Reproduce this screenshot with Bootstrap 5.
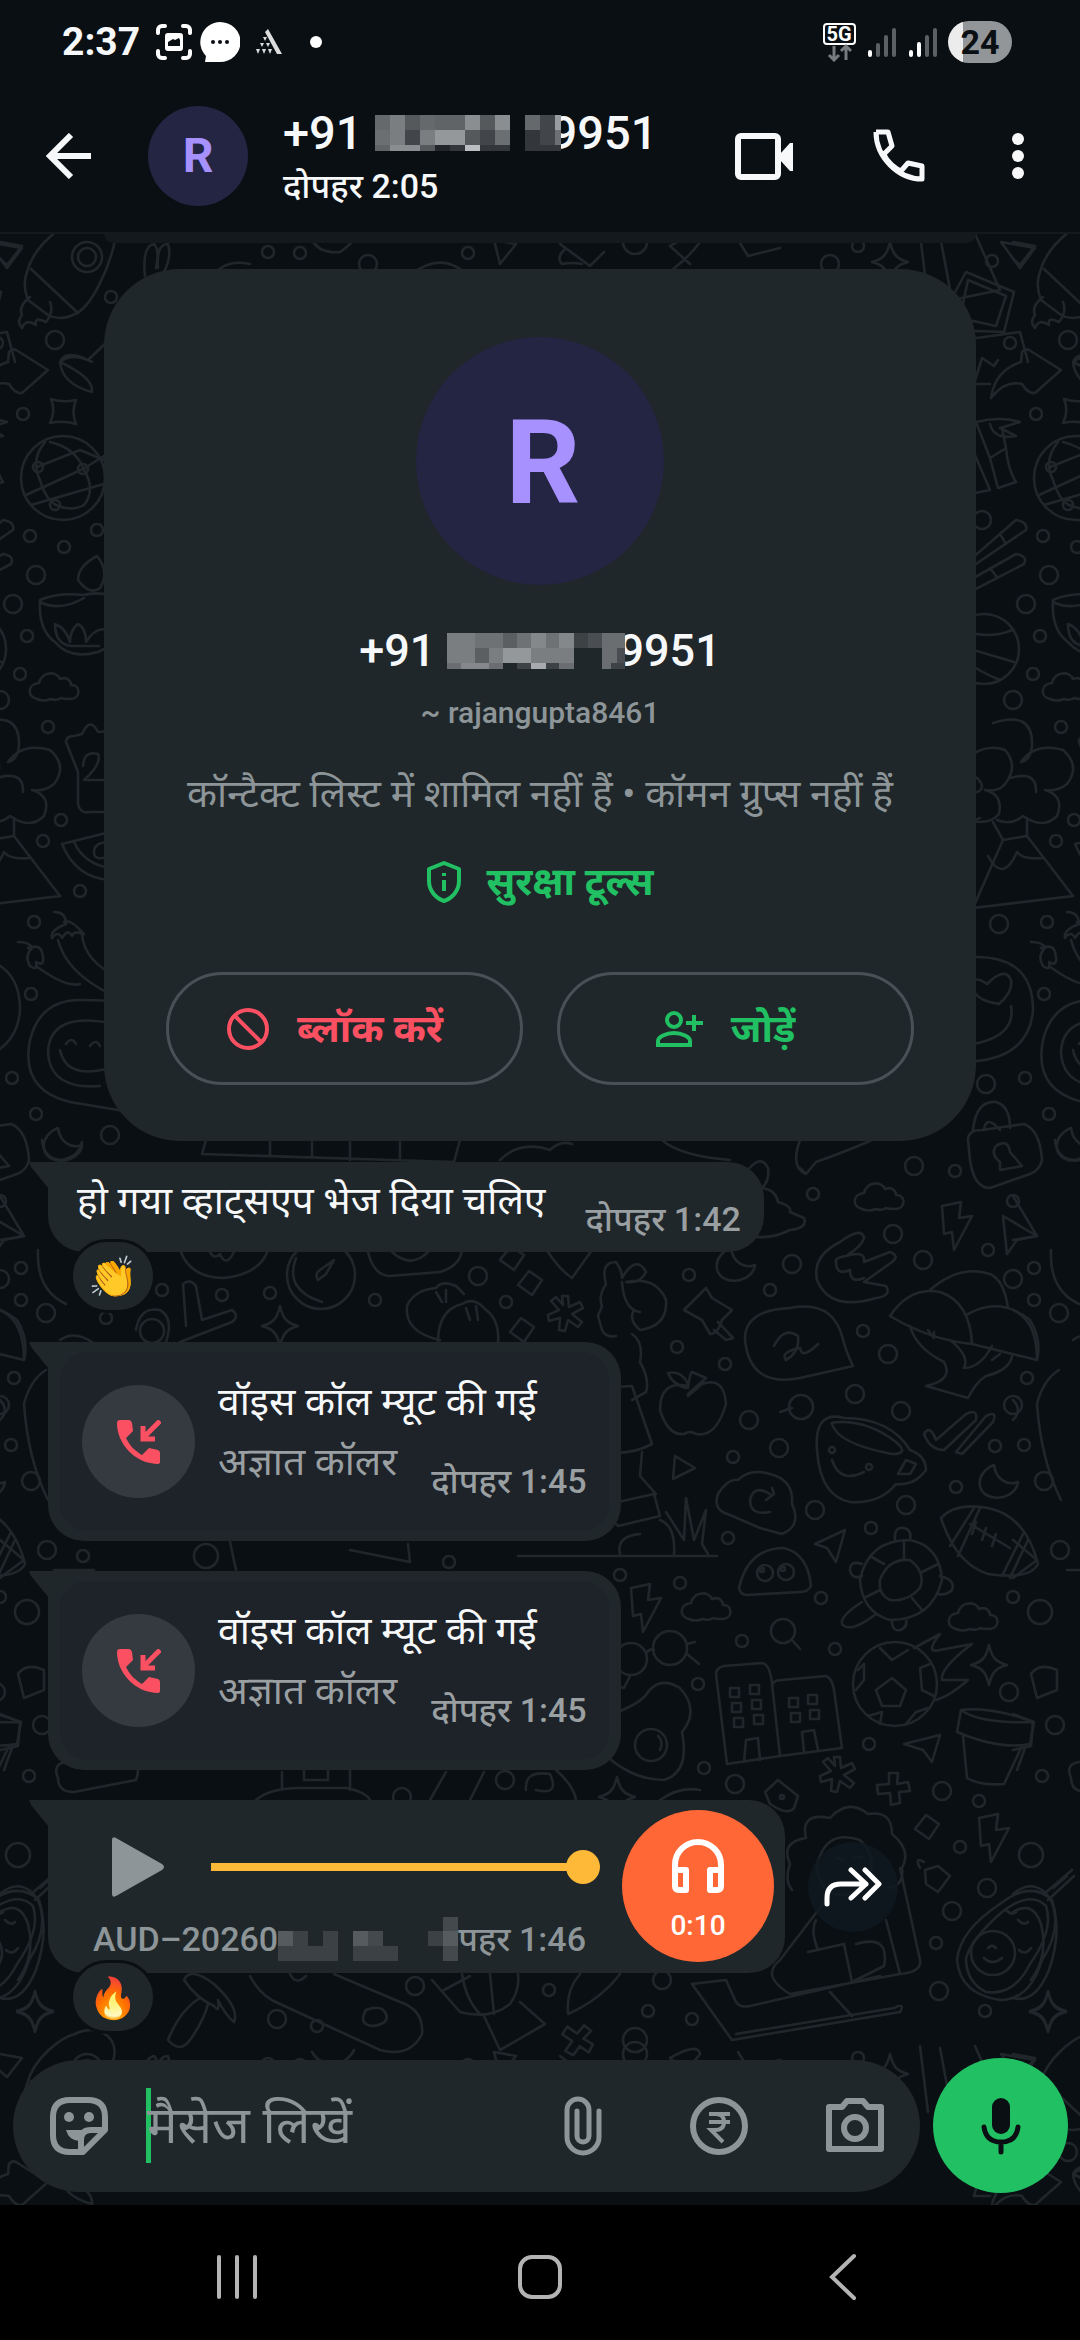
<!DOCTYPE html>
<html lang="hi">
<head>
<meta charset="utf-8">
<meta name="viewport" content="width=device-width, initial-scale=1">
<title>+91 9951</title>
<link href="https://cdn.jsdelivr.net/npm/bootstrap@5.3.0/dist/css/bootstrap.min.css" rel="stylesheet">
<style>
:root{--ink:#f7f8fa;--dim:#8d9598;--panel:#1f272a;--base:#0a0f13;--green:#21c063;--red:#fb5061}
body{background:var(--base);color:var(--ink);font-family:Roboto,"Noto Sans Devanagari","Noto Sans","Noto Color Emoji",sans-serif;font-weight:500;font-size:34px;line-height:44px}
svg{display:block;flex:none}
.plain{border:0;background:none;padding:0;color:inherit;display:flex;align-items:center;justify-content:center}
.statusbar{height:84px;padding:0 68px 0 62px}
.clock{font-size:39px;font-weight:700}
.radios{gap:6px}
.batt{width:64px;height:42px;border-radius:21px;background:linear-gradient(90deg,#ececec 15px,#929699 15px);color:#0a0f13;font-weight:700;font-size:34px;line-height:42px}
.topbar{height:150px;padding:0 32px 4px 46px;border-bottom:2px solid #14191d}
.face{background:#242443;color:#a791ff;border-radius:50%;font-weight:700;display:flex;align-items:center;justify-content:center}
.face-s{width:100px;height:100px;font-size:48px;margin:0 35px 0 56px}
.face-l{width:248px;height:248px;font-size:117px;padding:4px 0 0 6px}
.num{font-size:47px;line-height:56px;gap:12px;margin-bottom:3px}
.num-l{font-size:45px;line-height:60px;gap:12px;margin-top:36px}
.num svg,.num-l svg{position:relative;z-index:1}
.num-cut{margin-left:-22px}
.num-l .num-cut{margin-left:-19px}
.tap{width:60px;height:60px}
.calls{gap:75px;margin-right:59px}
.chat{background:var(--base)}
.wall{position:absolute;inset:0;width:100%;height:100%;z-index:0}
.layer{position:relative;z-index:1}
.older{height:9px;margin:0 104px;background:#13191c;border-radius:0 0 24px 24px}
.who{margin:26px 104px 21px;padding:68px 62px 56px;background:var(--panel);border-radius:76px}
.handle{font-size:30px;line-height:40px;color:var(--dim);margin-top:12px}
.facts{font-size:39px;line-height:56px;color:var(--dim);font-weight:400;margin-top:33px;white-space:nowrap}
.safety{font-size:39px;line-height:56px;font-weight:700;color:var(--green);gap:24px;margin-top:32px;text-decoration:none}
.acts{gap:34px;margin-top:62px}
.act{flex:1 1 0;height:113px;border:3px solid #495156;border-radius:57px;font-size:39px;font-weight:700;gap:27px;padding-right:20px}
.red{color:var(--red)}.green{color:var(--green)}
.thread{padding:0 48px 85px}
.bub{position:relative;background:var(--panel);border-radius:0 36px 36px 36px;width:fit-content}
.bub::before{content:"";position:absolute;left:-19px;top:0;width:20px;height:27px;background:var(--panel);clip-path:polygon(0 0,100% 0,100% 100%,2px 5px)}
.body-t{font-size:39px;line-height:50px;font-weight:400;color:var(--ink)}
.stamp{color:#9a9fa2;font-size:34px;line-height:44px;white-space:nowrap}
.txt{padding:14px 23px 11px 29px;gap:40px;margin-bottom:90px;height:90px}
.react{position:absolute;left:22px;bottom:-61px;width:86px;height:74px;border-radius:37px;border:3px solid var(--base);background:var(--panel);font-size:40px;padding-top:3px;display:flex;align-items:center;justify-content:center}
.call{padding:10px 12px;margin-bottom:30px}
.call-in{background:#1d2329;border-radius:28px;padding:25px 22px 26px;gap:23px;height:179px}
.ring{width:113px;height:113px;border-radius:50%;background:#353940;margin-top:8px}
.caller{color:#9a9fa2;margin-top:10px}
.call-in .stamp{margin:32px 0 0 34px}
.audio{padding:10px 11px 11px 45px;height:173px}
.track{width:529px;padding:27px 39px 0 0}
.play-row{gap:46px;padding-left:18px;height:60px}
.seek{appearance:none;-webkit-appearance:none;flex:1;min-width:0;height:34px;background:linear-gradient(#ffb938,#ffb938) left center/calc(100% - 10px) 8px no-repeat;border-radius:4px;margin:0 -17px 0 0;padding:0}
.seek::-webkit-slider-thumb{-webkit-appearance:none;width:34px;height:34px;border-radius:50%;background:#ffb938}
.file{color:var(--dim);margin-top:20px;white-space:nowrap}
.disc{width:152px;height:152px;border-radius:50%;background:#ff6737;color:#fff;font-size:28px;line-height:32px;gap:17px;padding-top:9px}
.fwd{width:90px;height:90px;border-radius:50%;background:rgba(15,25,32,.8);margin-left:23px}
.composer{padding:0 12px 12px 13px;gap:13px}
.pill{flex:1 1 0;min-width:0;background:var(--panel);border-radius:66px;height:132px;padding:0 35px 0 36px}
.sticker{color:var(--dim)}
.msg{flex:1;min-width:0;height:75px;border:0;outline:0;padding:0 0 0 1px;margin-left:37px;color:var(--ink);font-size:51px;font-weight:400;background:linear-gradient(var(--green),var(--green)) left/5px 100% no-repeat}
.msg::placeholder{color:var(--dim);opacity:1}
.tools{gap:76px;color:var(--dim)}
.mic{width:135px;height:135px;border-radius:50%;background:var(--green);flex:none}
.sysnav{background:#000;height:135px;color:#b4b4b4;padding:8px 85px 0}
.sysnav .plain{flex:1 1 0}
</style>
<script src="https://cdn.jsdelivr.net/npm/bootstrap@5.3.0/dist/js/bootstrap.bundle.min.js"></script>
</head>
<body class="d-flex flex-column min-vh-100 m-0">

<div class="statusbar d-flex align-items-center justify-content-between">
  <div class="d-flex align-items-center">
    <span class="clock">2:37</span>
    <svg class="ms-3" width="36" height="36" viewBox="0 0 36 36" fill="none" stroke="#fff" stroke-width="4" stroke-linecap="round"><path d="M2 9V6a4 4 0 0 1 4-4h3M27 2h3a4 4 0 0 1 4 4v3M34 27v3a4 4 0 0 1-4 4h-3M9 34H6a4 4 0 0 1-4-4v-3"/><rect x="9" y="9" width="18" height="18" rx="3" fill="#fff" stroke="none"/><path d="M12 22v-4l5-3 2 1 4-2 1 2v6z" fill="#0a0f13" stroke="none"/></svg>
    <svg class="ms-2" width="40" height="40" viewBox="0 0 40 40"><path fill="#fff" d="M20 0a20 19.500 0 1 1 0 40H5l1-6A20 20 0 0 1 20 0z"/><g fill="#0a0f13"><circle cx="13" cy="20" r="2"/><circle cx="20" cy="20" r="2"/><circle cx="27" cy="20" r="2"/></g></svg>
    <svg class="ms-3" width="26" height="26" viewBox="0 0 26 26" fill="#ddd"><path d="M9 3l3-3 14 25h-5zM7 8h4l-2 4zM4 14h4l-2 4zm6 0h4l-2 4zM0 20h4l-2 5zm6 0h4l-2 5zm6 0h4l-2 5zM12 8h1l1 3z"/></svg>
    <svg class="ms-4" width="16" height="12"><circle cx="10" cy="6" r="6" fill="#fff"/></svg>
  </div>
  <div class="radios d-flex align-items-center">
    <svg width="35" height="40" viewBox="0 0 35 40" fill="none"><rect x="1" y="2" width="31" height="20" rx="3" stroke="#fff" stroke-width="2"/><text x="16" y="19" font-family="Roboto,sans-serif" font-weight="700" font-size="20" fill="#fff" text-anchor="middle">5G</text><path d="M11 24v13M6 33l5 5 5-5M23 38V25M18 29l5-5 5 5" stroke="#777b7e" stroke-width="3"/></svg>
    <svg width="36" height="30" viewBox="-4 0 36 30" stroke-width="4" stroke-linecap="round"><path d="M2 25v3" stroke="#fff"/><path d="M10 18v10M18 10v18M26 3v25" stroke="#5c6063"/></svg>
    <svg width="36" height="30" viewBox="-3 0 36 30" stroke-width="4" stroke-linecap="round"><path d="M2 25v3M10 17v11" stroke="#fff"/><path d="M18 10v18M26 3v25" stroke="#5c6063"/></svg>
    <span class="batt text-center">24</span>
  </div>
</div>

<header class="topbar d-flex align-items-center">
  <button class="plain" aria-label="वापस"><svg width="46" height="46" viewBox="0 0 46 46" fill="none" stroke="currentColor" stroke-width="6"><path d="M45 23H5M25 2L4 23l21 21"/></svg></button>
  <span class="face face-s">R</span>
  <div class="flex-grow-1">
    <div class="num d-flex align-items-center">+91
      <svg width="186" height="36" viewBox="0 0 186 36" shape-rendering="crispEdges"><path fill="#66696c" d="M0 0h15v15H0zM45 0h15v15H45zM150 0h15v15h-15z"/><path fill="#7b7e81" d="M15 0h15v30H15zM45 15h15v15H45z"/><path fill="#55595c" d="M30 0h15v15H30zM105 0h15v15h-15zM45 30h15v6H45zM90 15h15v15H90z"/><path fill="#606467" d="M60 0h30v15H60zM0 30h15v6H0z"/><path fill="#8a8e91" d="M90 0h15v15H90zM120 0h15v15h-15zM15 30h30v6H15z"/><path fill="#6b6f72" d="M0 15h15v15H0zM120 15h15v15h-15z"/><path fill="#42464a" d="M30 15h15v15H30zM105 15h15v15h-15zM165 0h15v30h-15z"/><path fill="#95989b" d="M60 15h30v15H60z"/><path fill="#bcbfc2" d="M90 30h15v6H90z"/><path fill="#33373b" d="M75 30h15v6H75zM105 30h30v6h-30zM150 15h15v21h-15zM165 30h21v6h-21z"/><path fill="#22262a" d="M60 30h15v6H60z"/><path fill="#9a9da0" d="M180 0h6v15h-6z"/><path fill="#6c7073" d="M180 15h6v15h-6z"/></svg>
      <span class="num-cut">9951</span></div>
    <div>दोपहर 2:05</div>
  </div>
  <div class="calls d-flex">
    <button class="plain tap" aria-label="वीडियो कॉल"><svg width="58" height="48" viewBox="0 0 58 48"><rect x="3" y="4" width="40" height="41" rx="3" fill="none" stroke="currentColor" stroke-width="6"/><path d="M45 22l10-11h3v28h-3L45 28z" fill="currentColor"/></svg></button>
    <button class="plain tap" aria-label="कॉल"><svg width="54" height="54" viewBox="0 0 54 54" fill="none" stroke="currentColor" stroke-width="5" stroke-linejoin="round"><path d="M4 3h12l4 14-9 9M4 3C4 28 26 50 50 50V37l-14-3-7 8M11 24C15 32 22 39 31 43"/></svg></button>
  </div>
  <button class="plain tap" aria-label="मेन्यू"><svg width="12" height="48" viewBox="0 0 12 48" fill="currentColor"><circle cx="6" cy="7" r="6"/><circle cx="6" cy="24" r="6"/><circle cx="6" cy="41" r="6"/></svg></button>
</header>

<main class="chat position-relative flex-grow-1 d-flex flex-column">
<svg class="wall" viewBox="0 234 1080 1971" preserveAspectRatio="xMidYMid slice" aria-hidden="true">
<defs>
<path id="star" d="M0-20C3-7 7-3 18 0C7 3 3 7 0 20C-3 7-7 3-18 0C-7-3-3-7 0-20z"/>
<path id="cloud" d="M-20 12c-10-2-10-15 2-16 3-12 18-12 21-4 8-3 11 3 11 6 10 0 10 13 0 14q-8 0-10-1-4 3-10 1-8 3-14 0z"/>
<path id="bolt" d="M-14-20L5-24 3-8 16-10-2 24-4 6-12 8z"/>
<path id="cur" d="M-16-18L18 2-2 6-12 20z"/>
<path id="moon" d="M-4-17C-2-2 10 4 20 0C18 18-14 22-18 4C-20-6-12-14-4-17z"/>
<path id="dia" d="M-12 2L-1-12 12-3 2 12z"/>
<path id="ast" d="M-3-18h6l1 11 11-5 3 6-11 6 10 8-4 5-10-7-3 11-6-1 1-12-11 3-1-6 11-5-8-9 5-4 7 8z"/>
<path id="plus" d="M-4-16h9l-1 11 11-2 2 9-11 1 1 11-9 2-1-12-12 1-1-9 12-1z"/>
<g id="tile">
<!-- dots scattered between the doodles -->
<g><circle cx="55" cy="340" r="9"/><circle cx="23" cy="414" r="6"/><circle cx="30" cy="536" r="6"/><circle cx="97" cy="530" r="6"/><circle cx="64" cy="547" r="6"/><circle cx="36" cy="575" r="9"/><circle cx="13" cy="604" r="9"/><circle cx="27" cy="636" r="6"/><circle cx="20" cy="674" r="6"/><circle cx="48" cy="727" r="6"/><circle cx="0" cy="700" r="9"/><circle cx="61" cy="820" r="6"/><circle cx="43" cy="841" r="6"/><circle cx="80" cy="891" r="6"/><circle cx="34" cy="922" r="6"/><circle cx="31" cy="994" r="6"/><circle cx="12" cy="1078" r="6"/><circle cx="36" cy="1114" r="6"/><circle cx="110" cy="1135" r="9"/><circle cx="111" cy="297" r="6"/></g>
<g><circle cx="268" cy="252" r="6"/><circle cx="300" cy="253" r="6"/><circle cx="368" cy="264" r="9"/><circle cx="468" cy="253" r="6"/><circle cx="635" cy="242" r="12"/><circle cx="830" cy="264" r="9"/><circle cx="858" cy="246" r="6"/><circle cx="992" cy="261" r="6"/><circle cx="982" cy="520" r="9"/><circle cx="999" cy="924" r="9"/><circle cx="986" cy="1084" r="9"/></g>
<g><circle cx="914" cy="1166" r="9"/><circle cx="955" cy="1171" r="6"/><circle cx="813" cy="1194" r="6"/><circle cx="893" cy="1234" r="9"/><circle cx="923" cy="1260" r="9"/><circle cx="988" cy="1250" r="6"/><circle cx="1013" cy="1279" r="9"/><circle cx="1013" cy="1201" r="6"/><circle cx="792" cy="1264" r="9"/><circle cx="689" cy="1275" r="6"/><circle cx="770" cy="1290" r="6"/><circle cx="863" cy="1331" r="6"/><circle cx="888" cy="1354" r="9"/><circle cx="1013" cy="1405" r="9"/><circle cx="677" cy="1347" r="6"/><circle cx="725" cy="1364" r="6"/><circle cx="749" cy="1420" r="9"/><circle cx="801" cy="1407" r="12"/><circle cx="855" cy="1394" r="9"/><circle cx="901" cy="1411" r="9"/><circle cx="779" cy="1448" r="9"/><circle cx="733" cy="1457" r="6"/><circle cx="995" cy="1446" r="6"/><circle cx="956" cy="1487" r="6"/><circle cx="906" cy="1505" r="9"/><circle cx="815" cy="1510" r="9"/><circle cx="871" cy="1528" r="6"/><circle cx="728" cy="1538" r="6"/><circle cx="620" cy="1575" r="6"/><circle cx="680" cy="1583" r="6"/><circle cx="821" cy="1598" r="6"/><circle cx="1013" cy="1597" r="6"/><circle cx="742" cy="1641" r="6"/><circle cx="835" cy="1649" r="6"/><circle cx="1009" cy="1692" r="9"/><circle cx="698" cy="1684" r="6"/><circle cx="869" cy="1744" r="6"/><circle cx="704" cy="1768" r="6"/><circle cx="735" cy="1784" r="9"/><circle cx="942" cy="1791" r="9"/><circle cx="979" cy="1801" r="6"/><circle cx="960" cy="1847" r="6"/><circle cx="987" cy="1888" r="9"/><circle cx="952" cy="1911" r="9"/><circle cx="936" cy="1943" r="6"/><circle cx="939" cy="1991" r="9"/><circle cx="985" cy="2011" r="6"/><circle cx="662" cy="1980" r="9"/><circle cx="648" cy="2011" r="6"/><circle cx="692" cy="2019" r="6"/></g>
<g><circle cx="21" cy="1268" r="6"/><circle cx="21" cy="1300" r="6"/><circle cx="46" cy="1313" r="9"/><circle cx="478" cy="1276" r="9"/><circle cx="375" cy="1300" r="6"/><circle cx="222" cy="1295" r="6"/><circle cx="270" cy="1293" r="6"/><circle cx="162" cy="1290" r="6"/><circle cx="106" cy="1318" r="6"/><circle cx="506" cy="1302" r="6"/><circle cx="14" cy="1378" r="6"/><circle cx="11" cy="1445" r="6"/><circle cx="31" cy="1481" r="9"/><circle cx="47" cy="1550" r="9"/><circle cx="83" cy="1556" r="6"/><circle cx="206" cy="1556" r="12"/><circle cx="449" cy="1562" r="6"/><circle cx="27" cy="1612" r="12"/><circle cx="42" cy="1725" r="9"/><circle cx="29" cy="1776" r="6"/><circle cx="402" cy="1797" r="9"/><circle cx="505" cy="1780" r="9"/><circle cx="18" cy="1855" r="12"/><circle cx="415" cy="1986" r="9"/><circle cx="277" cy="2019" r="9"/><circle cx="317" cy="2026" r="6"/><circle cx="549" cy="1990" r="6"/><circle cx="635" cy="2040" r="12"/></g>
<use href="#star" x="890" y="262"/><use href="#star" x="280" y="1326"/><use href="#star" x="989" y="1665"/><use href="#star" x="35" y="2012"/><use href="#star" x="1048" y="2011"/><use href="#star" x="617" y="1797"/>
<path d="M51 399q12 4 25 1q-5 12 0 24q-13-4-26-1q6-12 1-24z"/>
<use href="#cloud" x="57" y="687"/><use href="#cloud" x="882" y="1197"/><use href="#cloud" x="709" y="1607"/><use href="#cloud" x="976" y="1617"/>
<use href="#bolt" x="956" y="1226"/><use href="#bolt" x="645" y="1608"/><use href="#bolt" x="993" y="1838"/>
<use href="#cur" x="1019" y="1234"/><path d="M815 1544l30-14-9 32-9-14zM904 1744l36-9-8 27-9-12zM1001 242l34 6-15 20zM675 1456l20 12-22 11zM494 240l22 4-16 20zM0 242l22 4-15 19-7-6"/>
<use href="#moon" x="735" y="1265"/><use href="#moon" x="998" y="1482"/><use href="#moon" x="62" y="1145"/>
<use href="#dia" x="927" y="1827"/><use href="#dia" x="512" y="1258"/><use href="#dia" x="530" y="1283"/><use href="#dia" x="522" y="1330"/>
<use href="#ast" x="837" y="1775"/><use href="#ast" x="565" y="1314"/><use href="#plus" x="893" y="1789"/><use href="#plus" transform="translate(577 2040) rotate(40)"/>
<!-- rocket, flame, torch, globe -->
<path d="M27 272C34 245 62 225 75 222C95 212 118 222 114 245C108 270 92 305 77 313Q60 322 48 315L28 300Q22 285 27 272zM31 269L78 313M30 297Q18 306 22 315Q16 322 22 328Q26 318 36 325Q34 316 46 322Q54 312 50 302"/><circle cx="87" cy="257" r="15"/><circle cx="87" cy="257" r="9"/>
<path d="M60 362Q66 348 92 362Q72 352 60 362Q62 384 92 392Q94 378 60 362M76 356L88 360 130 320"/>
<path d="M-22 398Q-18 370 8 362L9 352Q12 348 16 350L48 370 22 393Q15 394 9 384Q-8 380-22 398z"/>
<circle cx="63" cy="478" r="42"/><path d="M37 467L80 450 104 460M26 495L83 469 104 456M31 505L104 484M45 442Q30 460 40 480Q46 500 56 505Q72 512 84 505Q96 490 84 470Q76 448 50 442"/><circle cx="38" cy="467" r="5"/><circle cx="83" cy="469" r="5"/><circle cx="55" cy="505" r="5"/>
<!-- lamp, calendar, melon, chillies -->
<path d="M40 600Q58 592 84 595Q100 590 130 600Q130 640 98 652Q70 660 55 642Q38 630 40 600M40 602Q60 612 84 598M78 580Q78 566 97 556Q110 572 100 588Q90 596 78 580M55 624Q66 628 70 642Q70 630 78 624Q86 628 86 642Q96 626 108 630M55 624q0 20 16 22h28"/>
<path d="M66 742Q66 736 74 736L82 734Q90 716 98 732L120 730M66 742L78 772V804Q80 814 90 812H120M83 766Q84 750 98 754Q102 764 84 780H110"/>
<path d="M62 844L110 832M62 844Q76 878 110 880M74 842Q84 864 110 868M110 842q-16 0-16 10t16 4"/>
<path d="M54 912q12 0 12 12Q50 930 52 938Q58 930 62 938Q68 928 72 936Q74 930 84 934Q70 918 64 922M58 940Q66 972 110 994M82 934Q84 962 120 978M18 942q12 0 14 6Q24 956 30 966Q38 972 36 962Q46 968 42 952Q40 944 28 948M36 966Q66 988 80 984"/>
<!-- tree over the volcano -->
<path d="M-33 818Q-50 828-54 800M-53 762Q-76 756-80 740Q-84 716-58 716Q-40 716-42 748Q-40 760-50 762Q-30 742-8 750Q6 766-8 784Q-14 792-28 790Q-10 794-14 814Q-24 826-46 820Q-60 812-68 822Q-90 826-104 812M-63 790Q-52 768-36 778Q-26 788-36 792M-98 768Q-90 752-68 760M-98 768Q-96 790-84 794"/>
<path d="M-20 723Q20 710 19 745Q18 760 8 762Q22 742 50 750Q68 766 54 784Q44 792 32 790Q52 796 44 816Q30 830 10 816Q-2 826-16 820M-3 778Q24 770 23 792"/>
<path d="M-20 822L-10 840 14 836 60 896-40 908-10 840M14 836V818M-25 856Q-10 884 4 852Q10 860 30 858"/>
<path d="M-53 958Q20 950 20 1010Q16 1062-53 1062M-40 986Q-40 974-26 984Q-8 966-2 980Q0 992-14 1004Q-40 1000-40 986M-2 1006Q4 1040-53 1046"/>
<path d="M30 1040Q40 1000 80 1000Q110 1000 150 1004M30 1040Q20 1090 70 1102L130 1112M115 1024Q50 1010 48 1052Q50 1090 100 1086M60 1050Q66 1080 110 1068M66 1044q6-8 10 0M90 1046q6-8 10 0"/>
<!-- photos, picture, flag, bars, ball -->
<path d="M940 236L952 300 1000 290 975 234M948 330L1004 332 1014 292 966 272 940 320M960 318L996 326 1006 296 968 280zM948 342L1020 332 1028 362M974 384L982 358 994 366 998 360M974 384H990"/><circle cx="1010" cy="343" r="6"/>
<path d="M976 422Q1000 416 1020 422L1000 428 1016 436Q994 440 990 424M976 422L990 458 1006 448 1002 428M990 458L998 488 1016 482Q1008 470 1006 448M975 455L990 490 970 494M970 560L1016 520Q1028 522 1026 530L970 568M970 580L1016 554Q1028 556 1024 564L970 592M1000 534l6 10M990 568l6 8"/>
<circle cx="984" cy="649" r="35"/><path d="M960 630Q990 640 1012 630M960 646L1014 662M960 658Q980 672 1000 680"/>
<path d="M973 1130Q976 1100 996 1102Q1010 1106 1010 1128M984 1130q2-16 16 0M968 1140Q968 1130 982 1130L1024 1124Q1040 1130 1042 1160Q1040 1170 1030 1174L990 1188Q974 1188 970 1160zM1000 1162q-10-8-4-16 12-8 14 6l12 14-22 4z"/>
<!-- hands, balloon, pin, bubble -->
<path d="M800 1140Q790 1168 806 1174L816 1162Q850 1150 872 1140M806 1174l-6-6M662 1140Q680 1156 730 1160M745 1174Q760 1152 768 1168Q770 1180 762 1188Q776 1190 778 1202Q792 1206 790 1212L804 1218Q808 1228 790 1230Q770 1240 750 1236"/>
<path d="M817 1280Q812 1256 840 1242Q862 1226 864 1238Q862 1246 846 1256Q866 1250 864 1262L890 1252Q900 1256 892 1262L864 1282 886 1286Q892 1296 876 1298Q830 1312 817 1280M836 1262q0 14 14 8 0 14 14 8M846 1256q-12 2-10 6"/>
<path d="M684 1310L706 1288 712 1298 732 1310 722 1320Q718 1334 710 1334L702 1320zM718 1322L733 1338 726 1340 714 1330"/>
<path d="M745 1340Q744 1310 790 1308Q832 1300 842 1336Q846 1352 853 1366L800 1378Q750 1388 745 1340M774 1346Q784 1326 798 1336Q800 1352 786 1360Q780 1352 800 1348Q802 1360 818 1344"/>
<!-- toadstools, apple, cup, checks -->
<path d="M890 1316Q910 1286 940 1292Q970 1302 972 1344Q930 1340 890 1316M930 1290Q960 1264 990 1274Q1004 1280 1008 1308M968 1314Q1000 1296 1030 1320Q1042 1340 1037 1360L972 1344M910 1326Q916 1348 944 1362Q954 1380 926 1386L968 1398Q976 1382 986 1376Q1010 1370 1012 1356M928 1330l6 8 0-6M950 1340Q970 1356 964 1368Q980 1368 992 1346M992 1360l8-6"/>
<path d="M688 1386Q660 1380 660 1410Q668 1436 684 1434Q690 1430 696 1434Q716 1438 726 1404Q724 1376 702 1384L688 1396M688 1388Q690 1372 692 1372L706 1378 688 1394M686 1388Q672 1384 668 1373Q682 1370 688 1384"/>
<path d="M817 1450Q814 1410 844 1418Q890 1418 910 1450Q926 1456 926 1470Q914 1486 896 1484Q880 1504 850 1502Q820 1496 817 1450M832 1424Q838 1444 892 1454Q910 1454 896 1442Q870 1422 842 1422Q830 1422 832 1424M898 1474L906 1460 916 1464 910 1474zM832 1460Q840 1484 864 1472"/><circle cx="832" cy="1450" r="3"/><circle cx="869" cy="1467" r="3"/>
<path d="M924 1434Q930 1424 936 1440L966 1414Q978 1408 976 1420L944 1450Q930 1450 924 1434M956 1452L986 1416Q998 1410 993 1422L962 1454z"/>
<!-- cloud sync, ball, turtle, ghost -->
<path d="M730 1515Q712 1510 718 1494Q728 1478 738 1480Q750 1468 770 1474Q794 1480 792 1504Q802 1526 782 1534L760 1528zM770 1494q-16-10-20 6 0 16 20 12M766 1500l8-6-2-6"/>
<path d="M941 1518Q956 1502 988 1508Q1026 1516 1038 1564Q1030 1580 988 1574Q956 1564 941 1518M950 1546L974 1508M958 1556L980 1508M1002 1576L1024 1532M1010 1578L1028 1540M970 1524L1010 1548M976 1522l-4 12M986 1528l-4 12M996 1534l-4 12"/>
<path d="M860 1580Q868 1540 910 1540Q940 1546 942 1580Q932 1620 890 1620Q862 1612 860 1580M880 1580Q888 1558 910 1560Q926 1572 920 1588Q908 1602 890 1600Q878 1594 880 1580M895 1540Q894 1526 904 1528Q912 1530 910 1540M862 1564Q850 1560 850 1570Q852 1580 862 1576M862 1602Q840 1616 842 1624Q850 1634 876 1614M892 1620Q892 1632 900 1630Q908 1628 906 1618M940 1576Q956 1580 952 1590Q946 1596 938 1594M904 1540v20M884 1564l-14-8M880 1590l-16 8M922 1572l16-8M912 1598l10 12"/>
<path d="M739 1588Q748 1548 784 1548Q808 1554 811 1586Q808 1592 800 1592L746 1595Q740 1594 739 1588"/><circle cx="765" cy="1573" r="8"/><circle cx="786" cy="1572" r="8"/><circle cx="762" cy="1570" r="2"/><circle cx="783" cy="1569" r="2"/>
<!-- woman on a rock -->
<path d="M606 1284Q600 1262 616 1262Q622 1270 622 1278Q636 1254 646 1272Q640 1284 626 1282Q656 1276 666 1300Q668 1326 640 1330Q628 1320 634 1310M606 1284Q598 1296 602 1306L598 1316 602 1330Q606 1338 616 1336M622 1282Q624 1310 640 1312M632 1334Q644 1342 640 1362Q650 1380 646 1392L632 1400M600 1388L632 1386 652 1444Q630 1456 600 1452M642 1452L640 1476 656 1494M600 1506L654 1494 660 1516 618 1526zM660 1520Q676 1526 674 1554M620 1554Q616 1536 640 1534M518 1556H717M666 1512L684 1540 686 1498 694 1540 706 1510 702 1544 708 1554"/>
<circle cx="783" cy="1631" r="12"/><path d="M792 1640l8 9M780 1412l12-4"/>
<circle cx="631" cy="1659" r="16"/><circle cx="670" cy="1648" r="17"/><path d="M647 1652q4-4 7-2M687 1644l8-2M687 1654l12 10M620 1672l-4 14 8 2 6-12"/>
<!-- football, egg, buildings, pot -->
<circle cx="895" cy="1684" r="42"/><path d="M876 1690L892 1678 906 1690 900 1706 882 1706zM880 1648L892 1660 908 1650M858 1670L864 1664V1680L856 1690M930 1664L920 1668 922 1690 934 1696M868 1716L882 1712 880 1724M906 1724L916 1712 928 1708M914 1648L940 1634Q924 1654 940 1650L972 1644Q940 1668 942 1680L968 1680Q950 1696 936 1700"/>
<path d="M600 1718Q640 1706 648 1692Q660 1676 680 1688Q700 1710 682 1732Q690 1772 664 1780Q630 1780 600 1750"/><circle cx="651" cy="1745" r="16"/><path d="M658 1736q6 6 2 14"/>
<path d="M716 1674Q716 1668 724 1666L762 1663Q770 1664 772 1684L780 1756 727 1764zM773 1684Q774 1680 782 1680L826 1676Q832 1678 834 1690L842 1748 780 1756M744 1762L746 1740 758 1738 760 1760M804 1752L802 1732 814 1730 818 1750M730 1688h9v9h-9zM750 1685h9v9h-9zM732 1703h9v9h-9zM752 1700h9v9h-9zM734 1718h9v9h-9zM754 1715h9v9h-9zM789 1698h9v9h-9zM808 1695h9v9h-9zM791 1713h9v9h-9zM810 1710h9v9h-9z"/>
<path d="M961 1710Q990 1706 1034 1722L1030 1744Q1000 1750 957 1732zM961 1710Q980 1724 1034 1722M963 1736L967 1778Q980 1786 1004 1784L1022 1746"/>
<path d="M765 1792L778 1780 798 1796 794 1808Q788 1816 770 1804z"/><circle cx="782" cy="1797" r="2"/>
<!-- reader with a laptop, small lock, avocado -->
<path d="M790 1864Q780 1842 806 1838Q800 1812 830 1818Q848 1798 868 1814Q892 1810 892 1834Q912 1850 902 1868Q904 1886 888 1888M790 1864Q784 1880 792 1890M820 1856Q830 1830 860 1840Q880 1860 866 1880Q850 1904 826 1890Q812 1870 820 1856M836 1858l8 2M854 1856l8 2M900 1868L920 1960Q922 1972 900 1974L790 1994Q760 1976 780 1960L826 1900M900 1974L886 1920M808 1952L844 1944 852 1982M856 1944Q890 1934 884 1966L852 1982M816 1920Q810 1930 818 1950M692 1984L726 1980 736 2002Q740 2008 750 2006L880 1976M692 1984L732 2040 900 2012Q906 2002 894 2008L736 2034M830 1992L852 2016"/>
<path d="M925 1870L938 1866 950 1876 938 1892 926 1884zM920 1868Q914 1856 924 1862"/>
<path d="M957 1960Q960 1930 1000 1904Q1030 1880 1052 1900Q1062 1930 1042 1960Q1030 2000 1000 2000Q960 1994 957 1960M966 1958Q972 1938 1002 1912Q1030 1890 1046 1906Q1054 1930 1030 1964Q1014 1996 986 1992Q966 1982 966 1958M1044 1894L1072 1870M1048 1900L1074 1876"/><circle cx="993" cy="1953" r="22"/><path d="M984 1958q8 8 18 0M988 1948q4-4 8 0M1006 1910q6 6 10 2M1018 1920q6 6 10 2"/>
<!-- left column further down -->
<path d="M42 1140Q44 1160 62 1160Q80 1156 82 1142M0 1196L24 1236 0 1240M38 1250Q36 1290 66 1304M0 1310Q24 1320 24 1360M60 1340Q74 1330 92 1342M0 1400Q10 1410 0 1420M46 1370Q30 1380 24 1404Q28 1460 48 1500M206 1140L202 1154 454 1162 460 1140M270 1140v16M312 1140v18M350 1142v18M400 1142v18M500 1160Q520 1140 550 1150Q560 1140 572 1144M548 1252Q560 1270 572 1278L592 1250M180 1250Q190 1278 224 1278Q260 1274 268 1250M210 1252q4 8 10 2 6 14 14-2M368 1252Q374 1276 390 1276L440 1272Q460 1266 462 1250M392 1252Q412 1270 430 1250"/>
<circle cx="321" cy="1275" r="34"/><path d="M318 1280q-4-6 2-10l14-10-8 14zM296 1258Q284 1290 322 1302"/>
<path d="M183 1284Q190 1278 196 1286L202 1320 232 1310Q240 1316 232 1322L180 1342M183 1284L186 1326M136 1330q4-24 24-20 14 8 6 32"/><circle cx="152" cy="1331" r="12"/>
<path d="M440 1340Q404 1332 407 1306Q414 1290 436 1288Q442 1280 456 1286L464 1294M438 1342Q438 1310 462 1304Q474 1296 486 1310Q500 1320 498 1344M436 1292l6 10M446 1290v12M466 1308l4 12M476 1306l2 14"/>
<path d="M0 1540L24 1560 0 1578M54 1570h40M18 1674Q26 1662 44 1670V1690L24 1698zM0 1714L20 1722 18 1746 0 1750M12 1748L4 1770M58 1778Q52 1764 66 1762L130 1754Q142 1764 136 1780L74 1792Q58 1792 58 1778M256 1800Q270 1788 300 1788Q320 1788 346 1788Q366 1792 370 1800M282 1772V1790M350 1770V1790M304 1770V1780H328V1770M430 1800L446 1772M470 1800L484 1772M526 1790Q524 1770 550 1774Q560 1796 536 1790M556 1770Q574 1786 576 1800M660 1800Q680 1786 700 1790M230 1542L236 1570M350 1550L410 1562 408 1544"/>
<path d="M0 1894Q22 1876 38 1900Q50 1930 36 1970Q22 2004 0 1998M0 1912Q20 1900 28 1924Q36 1956 18 1980M6 1950q6 6 12-2M40 1888l14-12"/>
<path d="M184 1980Q190 1966 214 1984Q240 2008 234 2022Q226 2016 218 2000Q220 2014 214 2006Q196 1998 184 1980M200 1998Q180 2010 168 2040Q180 2054 190 2040Q204 2020 208 2004"/>
<path d="M250 1976Q260 1996 280 2004L380 2050Q410 2058 422 2034Q424 2010 400 2002L334 1974M290 1974q6 12 16 2M366 2010q16-6 20 4t-14 12q-14-2-6-16"/>
<path d="M432 1980L460 2012Q490 2020 510 2004Q520 1990 518 1974M444 1990L470 1976M462 1974Q466 2000 480 2014M490 1974L494 2014M484 2016L500 2050 545 2024 520 2002M568 2012Q566 1990 580 1974M568 2014Q600 2000 620 1974"/>
<path d="M145 276Q142 246 154 244Q160 250 156 268M158 268Q156 244 168 244Q172 256 164 272M208 282Q222 258 250 264M312 240Q320 254 340 252Q352 244 354 238M410 275Q440 252 464 272M560 244L590 266 604 252M672 270Q690 256 700 242Q698 230 670 246L690 264M738 240L748 256 780 248M920 234L928 300M564 250q-8 8-2 14 10-2 20 0"/>
</g></defs>
<g fill="none" stroke="#20272b" stroke-width="2.600" stroke-linejoin="round" stroke-linecap="round"><use href="#tile"/><use href="#tile" x="1013"/><use href="#tile" x="-1013"/><use href="#tile" y="1812"/><use href="#tile" x="1013" y="1812"/></g>
</svg>

<div class="layer">
  <div class="older"></div>
  <section class="who d-flex flex-column align-items-center">
    <span class="face face-l">R</span>
    <div class="num-l d-flex align-items-center">+91
      <svg width="178" height="36" viewBox="0 0 178 36" shape-rendering="crispEdges"><rect width="127" height="15" fill="#6e7275"/><path fill="#84888a" d="M84 0h15v15H84zM112 0h15v15h-15zM28 30h14v6H14v-6z"/><path fill="#5b5f62" d="M56 0h14v15H56zM28 15h14v15H28z"/><path fill="#7a7e81" d="M0 0h28v30H0zM42 15h14v15H42zM84 15h43v15H84z"/><path fill="#94989a" d="M56 15h28v15H56z"/><path fill="#6a6e71" d="M0 30h14v6H0zM42 30h14v6H42zM112 30h15v6h-15zM155 0h23v30h-14v6h-9z"/><path fill="#3d4245" d="M127 0h14v15h-14zM70 30h14v6H70zM99 30h13v6H99zM164 30h14v6h-14z"/><path fill="#4a4e52" d="M141 0h14v15h-14zM170 15h8v15h-8z"/><path fill="#a8abad" d="M84 30h15v6H84z"/></svg>
      <span class="num-cut">9951</span></div>
    <div class="handle">~ rajangupta8461</div>
    <div class="facts">कॉन्टैक्ट लिस्ट में शामिल नहीं हैं • कॉमन ग्रुप्स नहीं हैं</div>
    <a href="#" class="safety d-flex align-items-center"><svg width="36" height="44" viewBox="0 0 36 44" fill="none" stroke="currentColor" stroke-width="4" stroke-linejoin="round"><path d="M18 3l15 6v12c0 9-6 17-15 20C9 38 3 30 3 21V9z"/><path d="M18 20v11M18 13v3"/></svg>सुरक्षा टूल्स</a>
    <div class="acts d-flex w-100">
      <button class="plain act red"><svg width="44" height="44" viewBox="0 0 44 44" fill="none" stroke="currentColor" stroke-width="4"><circle cx="22" cy="22" r="19"/><path d="M9 9l26 26"/></svg>ब्लॉक करें</button>
      <button class="plain act green"><svg width="48" height="38" viewBox="0 0 48 38" fill="none" stroke="currentColor" stroke-width="4"><circle cx="18" cy="10" r="7"/><path d="M2 35v-4c0-4 8-8 16-8s16 4 16 8v4zM38 5v16M30 13h17"/></svg>जोड़ें</button>
    </div>
  </section>

  <div class="thread">
    <div class="bub txt d-flex"><span class="body-t">हो गया व्हाट्सएप भेज दिया चलिए</span><span class="stamp align-self-end">दोपहर 1:42</span><span class="react">👏</span></div>

    <div class="bub call"><div class="call-in d-flex"><span class="ring d-flex align-items-center justify-content-center"><svg width="44" height="44" viewBox="0 0 44 44"><path fill="#fb5061" d="M0 3q0-3 3-3h9q2 0 3 3l1 8-7 7c4 8 8 12 16 17l7-7 9 2q2 1 2 3v9q0 2-3 2C18 43 0 24 0 3z"/><path d="M43 1L26 18M26 6v13h12" fill="none" stroke="#fb5061" stroke-width="5"/></svg></span>
      <div><div class="body-t">वॉइस कॉल म्यूट की गई</div><div class="d-flex"><span class="body-t caller">अज्ञात कॉलर</span><span class="stamp">दोपहर 1:45</span></div></div></div></div>

    <div class="bub call"><div class="call-in d-flex"><span class="ring d-flex align-items-center justify-content-center"><svg width="44" height="44" viewBox="0 0 44 44"><path fill="#fb5061" d="M0 3q0-3 3-3h9q2 0 3 3l1 8-7 7c4 8 8 12 16 17l7-7 9 2q2 1 2 3v9q0 2-3 2C18 43 0 24 0 3z"/><path d="M43 1L26 18M26 6v13h12" fill="none" stroke="#fb5061" stroke-width="5"/></svg></span>
      <div><div class="body-t">वॉइस कॉल म्यूट की गई</div><div class="d-flex"><span class="body-t caller">अज्ञात कॉलर</span><span class="stamp">दोपहर 1:45</span></div></div></div></div>

    <div class="d-flex align-items-center">
      <div class="bub audio d-flex">
        <div class="track">
          <div class="play-row d-flex align-items-center"><button class="plain" aria-label="चलाएं"><svg width="54" height="60" viewBox="0 0 54 60"><path fill="#8d9598" d="M1 3q0-4 4-2l46 26q4 3 0 6L5 59q-4 2-4-2z"/></svg></button><input class="seek" type="range" min="0" max="10" value="10" aria-label="ऑडियो की स्थिति"></div>
          <div class="file d-flex align-items-center justify-content-between"><span>AUD–20260</span><svg width="180" height="44" viewBox="0 0 180 44" shape-rendering="crispEdges"><path fill="#3b4144" d="M0 14h30v15H15v15H0zM15 29h45v15H15zM45 14h15v15H45zM75 29h45v15H75zM150 14h15v15h-15z"/><path fill="#555b5e" d="M0 14h15v15H0zM75 14h15v15H75zM165 14h15v15h-15z"/><path fill="#43494c" d="M90 14h15v15H90zM165 0h15v14h-15zM165 29h15v15h-15z"/></svg><span>पहर 1:46</span></div>
        </div>
        <span class="disc d-flex flex-column align-items-center justify-content-center"><svg width="54" height="54" viewBox="0 0 54 54" fill="none" stroke="currentColor" stroke-width="6" stroke-linejoin="round"><path d="M4 32V26a23 23 0 0 1 46 0v6"/><path d="M4 31h11v20H8q-4 0-4-4zM50 31H39v20h7q4 0 4-4z"/></svg>0:10</span>
        <span class="react">🔥</span>
      </div>
      <button class="plain fwd" aria-label="फ़ॉरवर्ड करें"><svg width="58" height="42" viewBox="0 0 58 42" fill="none" stroke="#fff" stroke-width="5" stroke-linecap="round" stroke-linejoin="round"><path d="M3 38v-6q0-14 14-14h25M27 4l15 14-15 14M41 4l14 14-14 14"/></svg></button>
    </div>
  </div>
</div>

<div class="layer composer d-flex align-items-center mt-auto">
  <div class="pill d-flex align-items-center">
    <button class="plain sticker" aria-label="स्टिकर"><svg width="60" height="60" viewBox="0 0 60 60" fill="none" stroke="currentColor" stroke-width="6" stroke-linejoin="round"><path d="M4 21Q4 4 21 4h18q17 0 17 17v13L34 56H21Q4 56 4 39z"/><path d="M32 56V44q0-10 10-10h14" /><g fill="currentColor" stroke="none"><circle cx="20" cy="21" r="5"/><circle cx="40" cy="21" r="5"/><path d="M17 34h19q-5 3-5 11-11 0-14-11z"/></g></svg></button>
    <input class="msg" type="text" placeholder="मैसेज लिखें" aria-label="मैसेज लिखें">
    <div class="tools d-flex">
      <button class="plain tap" aria-label="अटैच करें"><svg width="38" height="60" viewBox="0 0 38 60" fill="none" stroke="currentColor" stroke-width="5" stroke-linecap="round"><path d="M35 15v26a16 16 0 0 1-32 0V14a11 11 0 0 1 22 0v26a6 6 0 0 1-12 0V15"/></svg></button>
      <button class="plain tap" aria-label="भुगतान"><svg width="60" height="60" viewBox="0 0 60 60" fill="none" stroke="currentColor"><circle cx="30" cy="30" r="26" stroke-width="6"/><path d="M20 18h21M20 26h21M21 18h6q8 0 8 8t-9 8h-4l12 12" stroke-width="4"/></svg></button>
      <button class="plain tap" aria-label="कैमरा"><svg width="60" height="56" viewBox="0 0 60 56" fill="none" stroke="currentColor" stroke-width="6" stroke-linejoin="round"><path d="M4 9h13l5-6h16l5 6h13v42H4z"/><circle cx="30" cy="30" r="11"/></svg></button>
    </div>
  </div>
  <button class="plain mic" aria-label="आवाज़ रिकॉर्ड करें"><svg width="42" height="58" viewBox="0 0 42 58"><rect x="12" y="1" width="18" height="36" rx="9" fill="#0a0f13"/><path d="M4 30q2 15 17 15t17-15M21 45v10" fill="none" stroke="#0a0f13" stroke-width="5" stroke-linecap="round"/></svg></button>
</div>
</main>

<nav class="sysnav d-flex align-items-center">
  <button class="plain" aria-label="हाल के ऐप"><svg width="42" height="46" viewBox="0 0 42 46" stroke="currentColor" stroke-width="4" stroke-linecap="round"><path d="M3 3v40M21 3v40M39 3v40"/></svg></button>
  <button class="plain" aria-label="होम"><svg width="46" height="46" viewBox="0 0 46 46" fill="none" stroke="currentColor" stroke-width="4"><rect x="3" y="3" width="40" height="40" rx="12"/></svg></button>
  <button class="plain" aria-label="पीछे"><svg width="28" height="48" viewBox="0 0 28 48" fill="none" stroke="currentColor" stroke-width="4" stroke-linecap="round"><path d="M25 3L3 24l22 21"/></svg></button>
</nav>
</body>
</html>
